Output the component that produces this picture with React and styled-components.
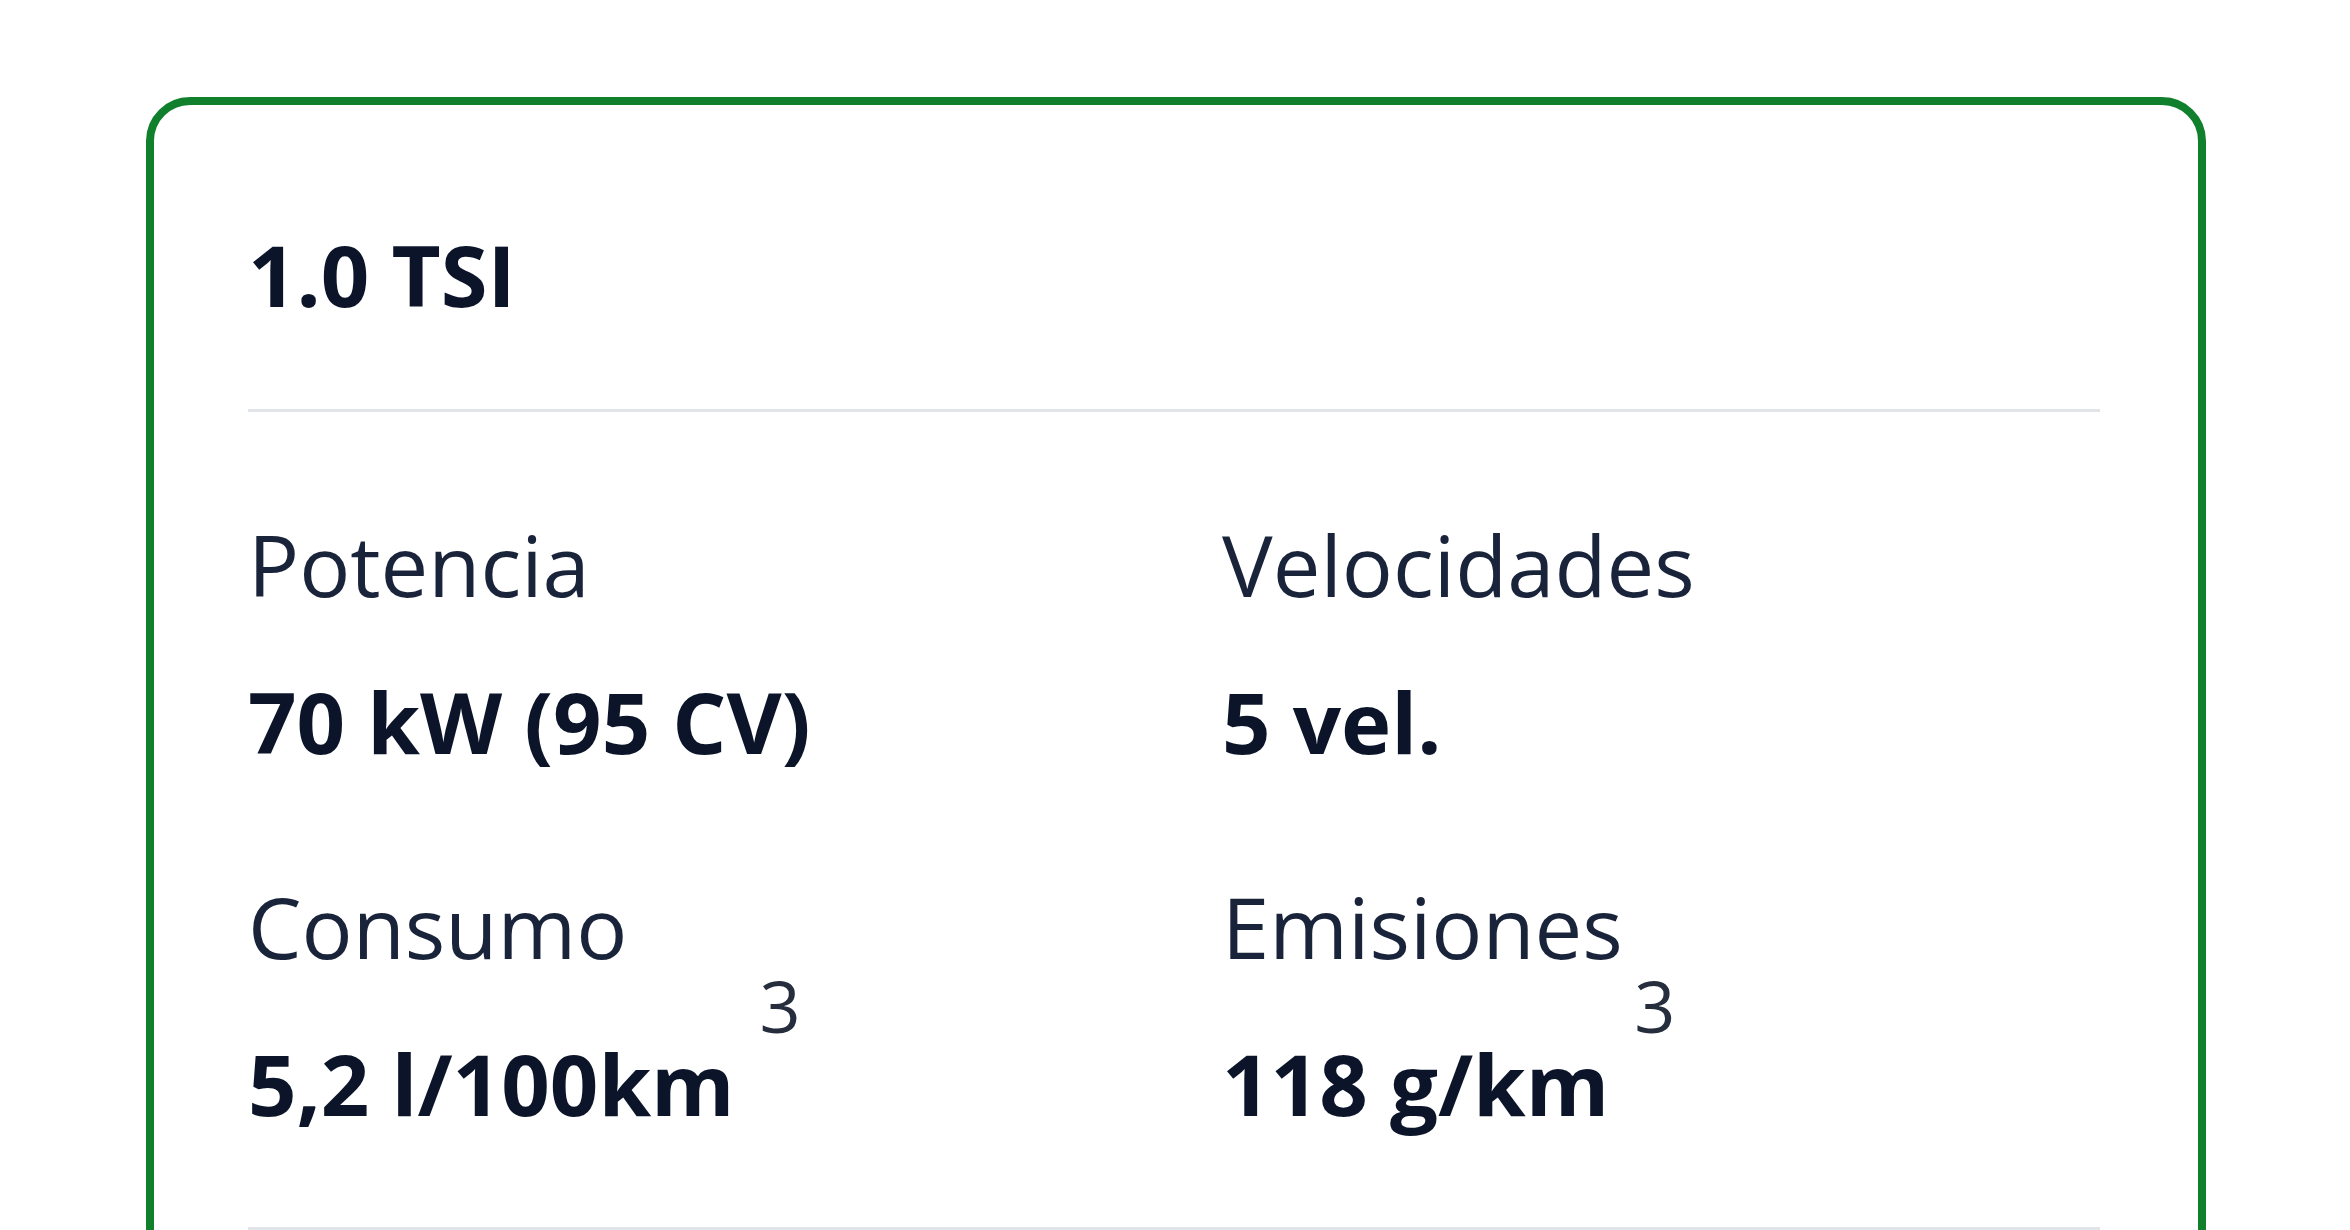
import React from 'react'
import styled, { createGlobalStyle } from 'styled-components'

const GlobalStyle = createGlobalStyle`
  html, body {
    margin: 0;
    padding: 0;
    background: #ffffff;
    font-family: "Open Sans", "Noto Sans", sans-serif;
    overflow: hidden;
  }
`

const Page = styled.div`
  padding: 97px 144px 0 146px;
`

const Card = styled.section`
  border: 8px solid #10802d;
  border-radius: 44px;
  padding: 109px 98px 120px 94px;
  background: #ffffff;
`

const Title = styled.h2`
  margin: 0;
  font-size: 85px;
  line-height: 120px;
  font-weight: 700;
  color: #0b1429;
`

const Divider = styled.hr`
  border: none;
  height: 3px;
  background: #e1e5e9;
  margin: ${props => props.top}px 0 0;
`

const SpecGrid = styled.div`
  display: grid;
  grid-template-columns: 1fr 1fr;
  column-gap: 96px;
  row-gap: 85px;
  margin-top: 92px;
`

const Spec = styled.div`
  display: flex;
  flex-direction: column;
`

const Label = styled.span`
  font-size: 85px;
  line-height: 120px;
  font-weight: 400;
  color: #19233a;
`

const Value = styled.span`
  margin-top: 37px;
  font-size: 85px;
  line-height: 120px;
  font-weight: 700;
  color: #0b1429;
  white-space: nowrap;
`

const Note = styled.sup`
  position: relative;
  top: -83px;
  margin-left: 25px;
  font-size: 72px;
  line-height: 0;
  font-weight: 400;
  vertical-align: baseline;
  color: #262d3d;
`

const specs = [
  { label: 'Potencia', value: '70 kW (95 CV)' },
  { label: 'Velocidades', value: '5 vel.' },
  { label: 'Consumo', value: '5,2 l/100km', note: '3' },
  { label: 'Emisiones', value: '118 g/km', note: '3' },
]

export default function App() {
  return (
    <Page>
      <GlobalStyle />
      <Card>
        <Title>1.0 TSI</Title>
        <Divider top={75} />
        <SpecGrid>
          {specs.map(s => (
            <Spec key={s.label}>
              <Label>{s.label}</Label>
              <Value>
                {s.value}
                {s.note && <Note>{s.note}</Note>}
              </Value>
            </Spec>
          ))}
        </SpecGrid>
        <Divider top={84} />
      </Card>
    </Page>
  )
}
